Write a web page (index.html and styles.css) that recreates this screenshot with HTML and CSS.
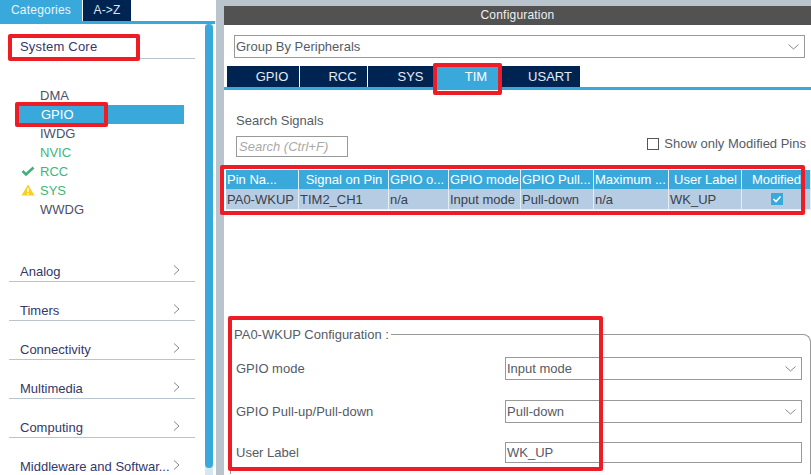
FILE: index.html
```html
<!DOCTYPE html>
<html lang="en">
<head>
  <meta charset="UTF-8">
  <meta name="viewport" content="width=device-width, initial-scale=1.0">
  <title>Pinout Configuration</title>
  <link rel="stylesheet" href="styles.css">
</head>
<body>
  <div class="app">
    <aside class="sidebar">
      <div class="side-tabs">
        <div class="side-tab active">Categories</div>
        <div class="side-tab">A-&gt;Z</div>
      </div>
      <div class="side-body">
        <div class="side-list">
          <div class="cat-head">System Core</div>
          <ul class="items">
            <li>DMA</li>
            <li class="selected">GPIO</li>
            <li>IWDG</li>
            <li class="green">NVIC</li>
            <li class="green">
              <svg class="state" width="14" height="12" viewBox="0 0 14 12"><path d="M1.5 6 5 9.5 12.5 2.5" fill="none" stroke="#45ae7c" stroke-width="2.6"/></svg>
              RCC
            </li>
            <li class="green">
              <svg class="state" width="14" height="12" viewBox="0 0 14 12"><path d="M7 0.5 13.5 11.5H0.5Z" fill="#fbcf1f"/><path d="M7 4V8M7 9V10.5" stroke="#fff" stroke-width="1.5"/></svg>
              SYS
            </li>
            <li>WWDG</li>
          </ul>
          <div class="cats">
            <div class="cat">Analog<svg class="chev" width="7" height="10" viewBox="0 0 7 10"><path d="M1 0.5 6 5 1 9.5" fill="none" stroke="#808890"/></svg></div>
            <div class="cat">Timers<svg class="chev" width="7" height="10" viewBox="0 0 7 10"><path d="M1 0.5 6 5 1 9.5" fill="none" stroke="#808890"/></svg></div>
            <div class="cat">Connectivity<svg class="chev" width="7" height="10" viewBox="0 0 7 10"><path d="M1 0.5 6 5 1 9.5" fill="none" stroke="#808890"/></svg></div>
            <div class="cat">Multimedia<svg class="chev" width="7" height="10" viewBox="0 0 7 10"><path d="M1 0.5 6 5 1 9.5" fill="none" stroke="#808890"/></svg></div>
            <div class="cat">Computing<svg class="chev" width="7" height="10" viewBox="0 0 7 10"><path d="M1 0.5 6 5 1 9.5" fill="none" stroke="#808890"/></svg></div>
            <div class="cat last">Middleware and Softwar...<svg class="chev" width="7" height="10" viewBox="0 0 7 10"><path d="M1 0.5 6 5 1 9.5" fill="none" stroke="#808890"/></svg></div>
          </div>
        </div>
        <div class="scroll"><div class="thumb"></div></div>
      </div>
    </aside>

    <main class="panel">
      <div class="panel-title">Configuration</div>
      <div class="panel-body">
        <div class="select group-by">
          <span>Group By Peripherals</span>
          <svg class="arrow" width="11" height="6" viewBox="0 0 11 6"><path d="M0.5 0.5 5.5 5 10.5 0.5" fill="none" stroke="#808890"/></svg>
        </div>
        <div class="tabs">
          <div class="tab t-gpio">GPIO</div>
          <div class="tab t-rcc">RCC</div>
          <div class="tab t-sys">SYS</div>
          <div class="tab t-tim active">TIM</div>
          <div class="tab t-usart">USART</div>
        </div>
        <div class="search-label">Search Signals</div>
        <div class="search-row">
          <div class="search-box">Search (Ctrl+F)</div>
          <label class="only-mod"><span class="box"></span>Show only Modified Pins</label>
        </div>
        <div class="signals">
          <div class="th">Pin Na...</div>
          <div class="th center">Signal on Pin</div>
          <div class="th">GPIO o...</div>
          <div class="th">GPIO mode</div>
          <div class="th">GPIO Pull...</div>
          <div class="th">Maximum ...</div>
          <div class="th center">User Label</div>
          <div class="th center">Modified</div>
          <div class="td">PA0-WKUP</div>
          <div class="td">TIM2_CH1</div>
          <div class="td">n/a</div>
          <div class="td">Input mode</div>
          <div class="td">Pull-down</div>
          <div class="td">n/a</div>
          <div class="td">WK_UP</div>
          <div class="td center">
            <svg width="12" height="12" viewBox="0 0 12 12"><rect width="12" height="12" fill="#39a9dc"/><path d="M2.5 6 5 8.5 9.5 3.5" fill="none" stroke="#fff" stroke-width="1.6"/></svg>
          </div>
        </div>
        <fieldset class="config">
          <legend>PA0-WKUP Configuration :</legend>
          <div class="config-row first">
            <span class="config-label">GPIO mode</span>
            <div class="select">
              <span>Input mode</span>
              <svg class="arrow" width="11" height="6" viewBox="0 0 11 6"><path d="M0.5 0.5 5.5 5 10.5 0.5" fill="none" stroke="#808890"/></svg>
            </div>
          </div>
          <div class="config-row">
            <span class="config-label">GPIO Pull-up/Pull-down</span>
            <div class="select">
              <span>Pull-down</span>
              <svg class="arrow" width="11" height="6" viewBox="0 0 11 6"><path d="M0.5 0.5 5.5 5 10.5 0.5" fill="none" stroke="#808890"/></svg>
            </div>
          </div>
          <div class="config-row last">
            <span class="config-label">User Label</span>
            <div class="select text-input"><span>WK_UP</span></div>
          </div>
        </fieldset>
      </div>
    </main>
  </div>

  <!-- red annotation boxes drawn over the screenshot -->
  <div class="mark m-core"></div>
  <div class="mark m-gpio"></div>
  <div class="mark m-tim"></div>
  <div class="mark m-table"></div>
  <div class="mark m-config"></div>
</body>
</html>
```

FILE: styles.css
```css
/* Basic styling */
html, body {
  margin: 0;
  height: 475px;
  overflow: hidden;
}
body {
  position: relative;
  font-family: "Liberation Sans", Arial, sans-serif;
  font-size: 13px;
  color: #555b66;
  background: #fff;
}
.app {
  display: flex;
  height: 475px;
}

/* left column */
.sidebar {
  width: 216px;
  flex: none;
  background: #fff;
}
.side-tabs {
  display: flex;
  height: 21px;
  border-bottom: 3px solid #39a9dc;
  margin-right: 1px;
  font-size: 12px;
  letter-spacing: 0.2px;
}
.side-tab {
  width: 48px;
  line-height: 21px;
  text-align: center;
  color: #d9e6ee;
  background: #002452;
}
.side-tab.active {
  width: 82px;
  margin-right: 1px;
  background: #39a9dc;
  color: #e8f4fa;
}
.side-body {
  display: flex;
  height: 451px;
}
.side-list {
  width: 205px;
  flex: none;
}
.cat-head {
  margin: 0 10px 0 9px;
  height: 35px;
  box-sizing: border-box;
  border-bottom: 1px solid #b9c4cc;
  padding: 15px 0 0 11px;
  letter-spacing: 0.2px;
  color: #33386b;
}
.items {
  list-style: none;
  margin: 27px 0 0;
  padding: 0;
}
.items li {
  position: relative;
  height: 19px;
  line-height: 19px;
  margin-right: 21px;
  padding-left: 40px;
  color: #4d5068;
}
.items li.selected {
  margin-left: 19px;
  padding-left: 22px;
  background: #39a9dc;
  color: #fff;
}
.items li.green {
  color: #3fb57c;
}
.state {
  position: absolute;
  left: 21px;
  top: 3px;
}
.cats {
  margin-top: 24px;
}
.cat {
  display: flex;
  justify-content: space-between;
  align-items: center;
  height: 39px;
  box-sizing: border-box;
  margin: 0 10px 0 9px;
  padding: 18px 15px 0 11px;
  border-bottom: 1px solid #b9c4cc;
  color: #33386b;
}
.cat.last {
  border-bottom: none;
}
.chev {
  margin-top: -3px;
}
.scroll {
  width: 8px;
  background: #d5e7f4;
}
.thumb {
  height: 444px;
  background: #39a9dc;
  border-radius: 4px;
}

/* right column */
.panel {
  flex: 1;
  min-width: 0;
  padding: 6px 0 0 8px;
  background: #b9c4cc;
  display: flex;
  flex-direction: column;
}
.panel-title {
  height: 19px;
  line-height: 19px;
  text-align: center;
  font-size: 12px;
  letter-spacing: 0.2px;
  color: #f0f0f0;
  background: #525252;
}
.panel-body {
  flex: 1;
  min-height: 0;
  background: #fff;
  padding-top: 10px;
}
.select {
  display: flex;
  align-items: center;
  justify-content: space-between;
  box-sizing: border-box;
  height: 23px;
  border: 1px solid #999;
  padding: 0 5px 0 1px;
  background: #fff;
}
.group-by {
  margin: 0 6px 0 10px;
  padding-left: 1px;
}
.tabs {
  display: flex;
  height: 21px;
  margin-top: 8px;
  padding-left: 3px;
  border-bottom: 3px solid #39a9dc;
}
.tab {
  line-height: 21px;
  box-sizing: border-box;
  text-align: center;
  padding-left: 18px;
  color: #e3ecf2;
  background: #002452;
  margin-right: 1px;
}
.tab.active {
  background: #39a9dc;
  color: #fff;
}
.t-gpio { width: 72px; }
.t-rcc { width: 67px; }
.t-sys { width: 65px; padding-left: 20px; }
.t-tim { width: 66px; }
.t-usart { width: 80px; margin-right: 0; margin-left: -1px; padding-left: 20px; }
.search-label {
  margin: 23px 0 0 12px;
  height: 15px;
  line-height: 15px;
}
.search-row {
  display: flex;
  justify-content: space-between;
  align-items: flex-start;
  margin: 8px 5px 0 12px;
}
.search-box {
  box-sizing: border-box;
  width: 112px;
  height: 21px;
  line-height: 19px;
  padding-left: 2px;
  border: 1px solid #999;
  font-style: italic;
  color: #aaa;
}
.only-mod {
  display: flex;
  align-items: center;
  height: 13px;
  margin-top: 1px;
}
.box {
  width: 12px;
  height: 12px;
  box-sizing: border-box;
  border: 1px solid #555;
  margin-right: 5px;
}
.signals {
  display: grid;
  grid-template-columns: 73px 90px 60px 72px 73px 75px 73px 1fr;
  grid-template-rows: 20px 20px;
  margin: 13px 0 0 2px;
}
.th, .td {
  box-sizing: border-box;
  padding-left: 1px;
  white-space: nowrap;
  overflow: hidden;
  line-height: 19px;
  border-right: 1px solid #e6edf3;
}
.th {
  background: #39a9dc;
  color: #fff;
  border-bottom: 1px solid #b5cce3;
}
.td {
  background: #b5cce3;
  color: #3d4048;
  border-bottom: 1px solid #e6edf3;
}
.center {
  text-align: center;
}
.td.center svg {
  margin-top: 3px;
}
.config {
  margin: 117px 0 0 6px;
  padding: 0 8px 11px 5px;
  border: 1px solid #999;
  border-bottom: none;
  border-radius: 0 8px 0 0;
  min-width: 0;
}
.config legend {
  padding: 0 2px 0 4px;
  margin-left: -6px;
  height: 15px;
  line-height: 15px;
}
.config-row {
  display: flex;
  align-items: center;
  justify-content: space-between;
  margin-top: 20px;
}
.config-row.first {
  margin-top: 15px;
}
.config-row.last {
  margin-top: 19px;
}
.config-row .select {
  width: 297px;
}
.config-row .text-input {
  height: 21px;
}

/* annotation boxes */
.mark {
  position: absolute;
  box-sizing: border-box;
  border: 4px solid #ee1c25;
  border-radius: 2px;
}
.m-core { left: 8px; top: 34px; width: 132px; height: 27px; }
.m-gpio { left: 15px; top: 102px; width: 93px; height: 25px; }
.m-tim { left: 433px; top: 63px; width: 69px; height: 32px; }
.m-table { left: 220px; top: 165px; width: 585px; height: 50px; }
.m-config { left: 228px; top: 316px; width: 375px; height: 155px; }
```
